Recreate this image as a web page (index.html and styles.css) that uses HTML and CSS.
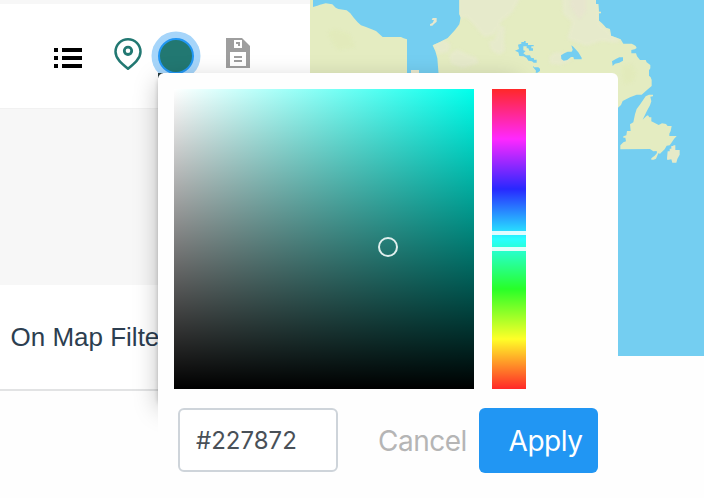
FILE: index.html
```html
<!DOCTYPE html>
<html lang="en">
<head>
<meta charset="utf-8">
<title>Map style</title>
<link rel="stylesheet" href="styles.css">
</head>
<body>
<div class="page">
  <aside class="sidebar">
    <header class="toolbar">
      <svg class="icon-list" width="28" height="20" viewBox="0 0 28 20" shape-rendering="crispEdges"><path d="M0 0h4v4H0zM8 0h20v4H8zM0 8h4v4H0zM8 8h20v4H8zM0 16h4v4H0zM8 16h20v4H8z"/></svg>
      <svg class="icon-pin" width="28" height="34" viewBox="0 0 28 34" fill="none" stroke="#227872"><path stroke-width="2.5" stroke-linejoin="round" d="M14 30.7C8 25.8 1.5 20.6 1.5 13.8a12.5 12.5 0 0 1 25 0C26.5 20.6 20 25.8 14 30.7Z"/><circle cx="14" cy="12.8" r="3.7" stroke-width="2.8"/></svg>
      <button class="swatch" aria-label="Color"></button>
      <svg class="icon-save" width="24" height="30" viewBox="0 0 24 30"><path fill="#9e9e9e" d="M0 0h16l8 8v22H0z"/><path fill="#fff" d="M8 2h8v8H8zM4 14h16v14H4z"/><path fill="#9e9e9e" d="M10 4h4v4h-2V6h-2zM8 18h8v2H8zM8 22h8v2H8z"/></svg>
    </header>
    <div class="spacer"></div>
    <div class="filters">On Map Filters</div>
  </aside>
  <svg class="map" width="394" height="356" viewBox="310 0 394 356">
    <defs>
      <filter id="soft"><feGaussianBlur stdDeviation="1.5"/></filter>
      <path id="west" transform="translate(300 0) scale(.33333)" d="M39 -3V21L52 17 60 14 77 10 97 13 107 23 115 27 140 31 151 40 160 52 173 67 183 76 198 81 215 88 228 93 248 111H303L311 115 321 118V225H30V-3Z"/>
      <path id="mid" transform="translate(300 0) scale(.33333)" d="M478 -3V42L482 53 478 73 465 90 443 114 420 126 398 136 406 153 412 175 416 225H610V-3Z"/>
      <path id="east" transform="translate(500 0) scale(.33333)" d="M-20 -3H288V12H295L297 35H303V40H297V62L306 70 313 77 318 83 330 87 333 107 350 113 362 118 370 131H395L401 134 407 138 410 144 404 148 394 150V160H408L411 169 420 180H437L440 187 451 195V205L447 211V227L452 232 455 240V258L440 271 425 284 410 284 390 292 368 303 363 315 354 323H300V240H-20Z"/>
      <clipPath id="land"><use href="#west"/><use href="#mid"/><use href="#east"/></clipPath>
    </defs>
    <rect x="310" width="394" height="356" fill="#74cef1"/>
    <g fill="#e4ecc1">
      <use href="#west"/><use href="#mid"/><use href="#east"/>
      <g transform="translate(300 0) scale(.33333)">
        <path fill="#e8e8ce" d="M398 54H410V65L402 72 397 77H390V73L398 68 402 60H395ZM333 210H357V225H333Z"/>
      </g>
      <g transform="translate(500 0) scale(.33333)">
        <path d="M361 448V436L370 427 378 424 376 413H370V409L379 406 381 393H392L390 373 400 367 405 343 410 327 419 315 437 289 447 284H459V289L451 290 454 304 450 316 441 332 428 359L439 348 444 346 448 352H454V364L463 368 476 375 486 370 498 372 503 378H515L512 393 508 401V408H530L522 417 514 429 509 436 500 437 494 448 480 461 475 460 468 476 461 479H454V475L464 467 471 459 470 453 460 454 450 447Z"/>
        <path fill="#e6eac8" d="M501 475L503 454H509V446H514V438H520V436H526V450H539V464L532 477 529 488H517L514 478 502 480Z"/>
      </g>
    </g>
    <g clip-path="url(#land)">
      <g fill="#e7eacd" filter="url(#soft)" opacity=".85">
        <path d="M458-5h64l-10 18-10 8-8 14-10 2-10-12-8-8-8 3zM432 44l11-5 8 6-3 7-10 2zM449 55l8-6 10 5 9 3 3 6-16 5-12-4zM489 42l6-3 4-14 6 2-1 12 1 12-6 4-8-5zM562-5h36l2 28 20 17-3 3-16-2-14 5-20-7 5-17-9-8zM549 57l6-5 10 1 6 8-10 4-11-1z"/>
      </g>
      <path fill="#e8e2d0" opacity=".6" filter="url(#soft)" d="M572-5h14v16l-6 8-5-5-5-9z"/>
      <path fill="#e1eab8" opacity=".6" filter="url(#soft)" d="M328 33l6-4 16 5 5 13-17 3-5-6zM622 67l10-3 4 9-3 9-9 2-2-9z"/>
    </g>
    <g fill="#74cef1" transform="translate(500 0) scale(.33333)">
      <path d="M45 152L57 147 54 134 64 131V126H72V123H77V129H84V135H101V139H94V145H99V152H88L85 145H80V139L70 139V151L77 153 70 160 78 166H90L93 173 102 175V179H110V188H101L96 184 85 182 80 174 71 169 58 168 55 157ZM102 198V202H115L120 206V213L112 218H107L108 212 99 201ZM183 166L193 160 203 155 215 155 218 149 214 136 220 140 235 157 245 173V178H222L220 171 213 171 202 180 191 182 184 177ZM336 184L346 178 358 172H369V182L358 188 345 191 338 198Z"/>
    </g>
  </svg>

  <section class="popover">
    <div class="shadow"></div>
    <div class="content">
      <div class="pickers">
        <div class="saturation"><span class="cursor"></span></div>
        <div class="hue"><span class="thumb"></span></div>
      </div>
      <div class="actions">
        <input class="hex" value="#227872" aria-label="Hex color">
        <span class="cancel">Cancel</span>
        <button class="apply">Apply</button>
      </div>
    </div>
  </section>
</div>
</body>
</html>
```
FILE: styles.css
```css
* { box-sizing: border-box; }
body { margin: 0; background: #fff; font-family: Inter, "Liberation Sans", sans-serif; }
.page { position: relative; display: flex; align-items: flex-start; width: 704px; height: 498px; overflow: hidden; background: #fefefe; }
.sidebar { width: 310px; flex: none; height: 498px; border-top: 4px solid #f7f7f7; background: #fefefe; }
.toolbar { display: flex; align-items: flex-start; height: 104px; padding: 34px 0 0 54px; background: #fff; }
.icon-list { margin-top: 10px; }
.icon-pin { margin-left: 32px; }
.swatch { width: 36px; height: 36px; margin-left: 16px; padding: 0; border: 2px solid #2196f3; border-radius: 50%; background: #227872; box-shadow: 0 0 0 6.5px #a6d5fa; }
.icon-save { margin-left: 32px; }
.spacer { height: 177px; background: #f7f7f7; border-top: 1px solid #f1f1f1; }
.filters { height: 106px; padding-left: 10.5px; border-bottom: 2px solid #e2e3e4; color: #2c3e50; font: 26px/104px "Liberation Sans", sans-serif; white-space: nowrap; background: #fff; }
.map { display: block; flex: none; }
.popover { position: absolute; left: 158px; top: 73px; width: 460px; height: 425px; background: linear-gradient(135deg, #26383c 4px, transparent 4px); }
.shadow { position: absolute; left: 0; top: 4px; width: 360px; height: 328px; border-radius: 6px; box-shadow: 0 0 4px rgba(0,0,0,.2), 0 4px 24px rgba(0,0,0,.25); }
.content { position: relative; height: 425px; padding: 16px 20px 0 16px; border-radius: 6px 6px 0 0; background: #fefefe; }
.pickers { display: flex; gap: 18px; }
.saturation { position: relative; width: 300px; height: 300px; background: linear-gradient(to top, #000, transparent), linear-gradient(to right, #fff, #00ffec); }
.cursor { position: absolute; left: 204px; top: 148px; width: 20px; height: 20px; border: 2px solid #e0efed; border-radius: 50%; }
.hue { position: relative; width: 34px; height: 300px; background: linear-gradient(#ff2828, #ff28ff 16.67%, #2828ff 33.33%, #28ffff 50%, #28ff28 66.67%, #ffff28 83.33%, #ff2828); }
.thumb { position: absolute; left: 0; top: 142px; width: 34px; height: 20px; border: solid rgba(255,255,255,.86); border-width: 4px 0; }
.actions { display: flex; margin: 19px 0 0 4px; }
.hex { width: 160px; height: 64px; padding: 0 16px; border: 2px solid #ced4da; border-radius: 6px; outline: 0; background: #fff; color: #495057; font: 24px Inter, sans-serif; }
.cancel { width: 101px; margin-left: 40px; color: #b5b5b5; font-size: 28px; line-height: 67px; letter-spacing: -.5px; }
.apply { width: 119px; height: 65px; padding: 2px 0 0 14px; border: 0; border-radius: 6px; background: #2196f3; color: #fff; font: 28px/63px Inter, sans-serif; letter-spacing: -.5px; }
```
